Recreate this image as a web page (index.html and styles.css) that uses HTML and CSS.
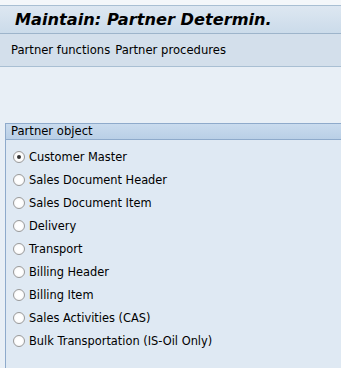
FILE: index.html
```html
<!DOCTYPE html>
<html>
<head><meta charset="utf-8"><link rel="stylesheet" href="styles.css"></head>
<body>
<div class="top-strip"></div>
<div class="title-bar"><h1 class="title">Maintain: Partner Determin.</h1></div>
<div class="toolbar"><span class="tb-item">Partner functions</span><span class="tb-item">Partner procedures</span></div>
<div class="content">
  <div class="group">
    <div class="group-head">Partner object</div>
    <div class="group-body">
      <label class="opt"><span class="radio checked"></span>Customer Master</label>
      <label class="opt"><span class="radio"></span>Sales Document Header</label>
      <label class="opt"><span class="radio"></span>Sales Document Item</label>
      <label class="opt"><span class="radio"></span>Delivery</label>
      <label class="opt"><span class="radio"></span>Transport</label>
      <label class="opt"><span class="radio"></span>Billing Header</label>
      <label class="opt"><span class="radio"></span>Billing Item</label>
      <label class="opt"><span class="radio"></span>Sales Activities (CAS)</label>
      <label class="opt"><span class="radio"></span>Bulk Transportation (IS-Oil Only)</label>
    </div>
  </div>
</div>
</body>
</html>
```
FILE: styles.css
```css
html, body { margin: 0; padding: 0; }
body { width: 341px; height: 368px; overflow: hidden; background: #e8eff6; font-family: "DejaVu Sans", sans-serif; color: #000; }
.top-strip { height: 5px; background: #f4f7fa; border-bottom: 1px solid #a9bfd3; }
.title-bar { height: 27px; background: linear-gradient(#dde7f1, #cbdbea); border-bottom: 1px solid #9db4ca; display: flex; align-items: center; padding-left: 15px; }
.title { margin: 0; font-family: "DejaVu Sans", sans-serif; font-size: 16.2px; font-weight: bold; font-style: italic; }
.toolbar { height: 32px; background: #d3dfeb; border-bottom: 1px solid #a9bfd3; display: flex; align-items: center; padding-left: 11px; gap: 5px; font-size: 11.6px; }
.content { padding-top: 56px; padding-left: 5px; }
.group { border: 1px solid #8eaacb; border-right: none; background: #dfe9f3; height: 260px; }
.group-head { height: 15px; background: linear-gradient(#c9dbee, #b9cfe6); border-bottom: 1px solid #8eaacb; font-size: 11.6px; padding-left: 5px; line-height: 14px; }
.group-body { padding-top: 5px; padding-left: 7px; display: flex; flex-direction: column; }
.opt { height: 23px; display: flex; align-items: center; font-size: 11.4px; gap: 4px; }
.radio { width: 12px; height: 12px; border-radius: 50%; border: 1px solid #9a9a9a; background: radial-gradient(#ffffff 40%, #f0f0f0); box-sizing: border-box; display: flex; align-items: center; justify-content: center; }
.radio.checked::after { content: ""; width: 4px; height: 4px; border-radius: 50%; background: #333; }
```
